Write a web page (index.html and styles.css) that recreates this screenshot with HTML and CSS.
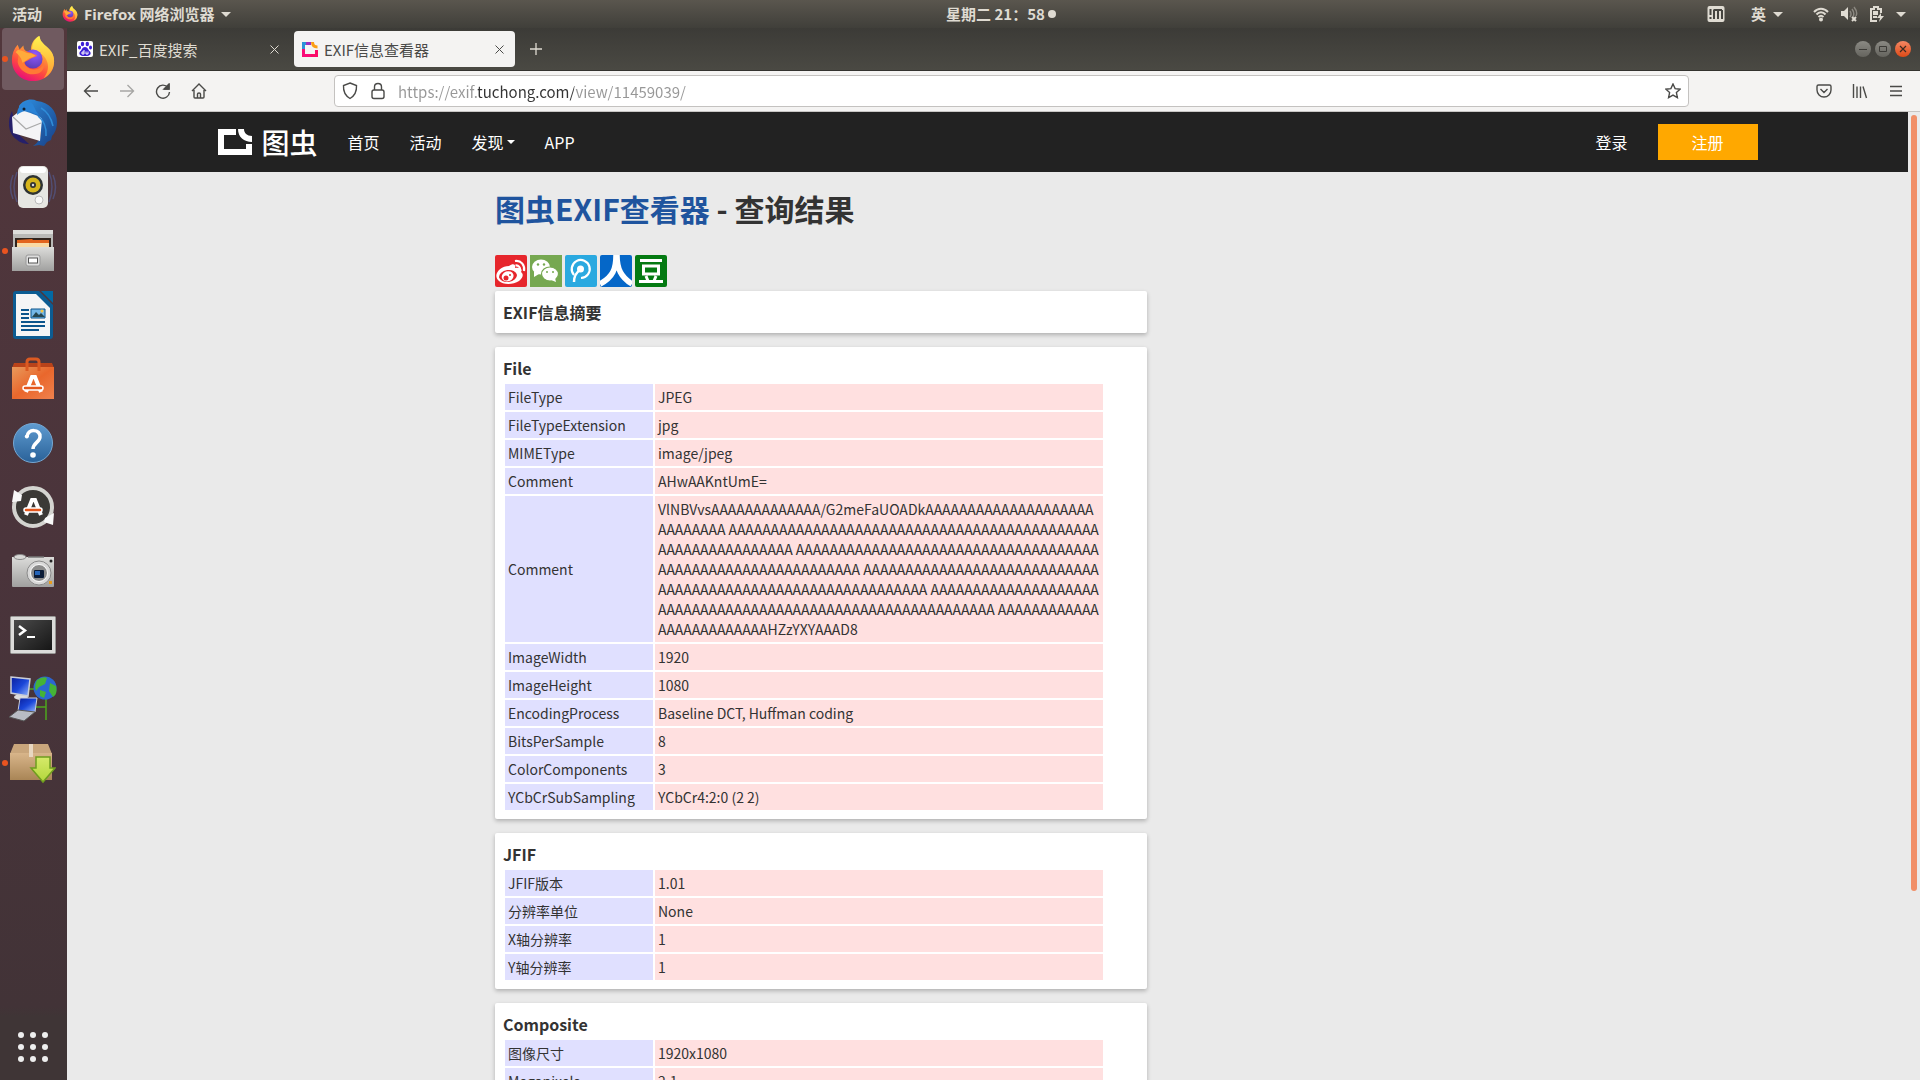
FILE: index.html
```html
<!DOCTYPE html>
<html lang="zh-CN">
<head>
<meta charset="utf-8">
<title>EXIF信息查看器</title>
<link rel="stylesheet" href="styles.css">
</head>
<body>
<svg class="defs" aria-hidden="true">
  <defs>
    <linearGradient id="fox" x1="0.8" y1="0" x2="0.3" y2="1"><stop offset="0" stop-color="#fff44f"/><stop offset=".35" stop-color="#ffa436"/><stop offset=".7" stop-color="#ff4a3f"/><stop offset="1" stop-color="#e60b7b"/></linearGradient>
    <radialGradient id="globe" cx=".6" cy=".25" r=".8"><stop offset="0" stop-color="#9059ff"/><stop offset="1" stop-color="#5b3bb0"/></radialGradient>
    <linearGradient id="tail" x1="0" y1="0" x2="0" y2="1"><stop offset="0" stop-color="#fff44f"/><stop offset="1" stop-color="#ff9a33"/></linearGradient>
    <linearGradient id="bird" x1="0" y1="0" x2="1" y2="1"><stop offset="0" stop-color="#2f8fe0"/><stop offset="1" stop-color="#173f86"/></linearGradient>
    <linearGradient id="steel" x1="0" y1="0" x2="0" y2="1"><stop offset="0" stop-color="#dcdcda"/><stop offset="1" stop-color="#a0a09f"/></linearGradient>
    <linearGradient id="bag" x1="0" y1="0" x2="1" y2="1"><stop offset="0" stop-color="#e89a5c"/><stop offset=".5" stop-color="#e9672c"/><stop offset="1" stop-color="#f0824e"/></linearGradient>
    <linearGradient id="help" x1="0" y1="0" x2="0" y2="1"><stop offset="0" stop-color="#5f9bd0"/><stop offset="1" stop-color="#2a6299"/></linearGradient>
    <linearGradient id="term" x1="0" y1="0" x2="1" y2="1"><stop offset="0" stop-color="#4a4a4a"/><stop offset="1" stop-color="#161616"/></linearGradient>
    <linearGradient id="screen" x1="0" y1="0" x2="1" y2="1"><stop offset="0" stop-color="#0a1f9c"/><stop offset=".5" stop-color="#1a46d8"/><stop offset="1" stop-color="#9bbcff"/></linearGradient>
    <linearGradient id="box" x1="0" y1="0" x2="0" y2="1"><stop offset="0" stop-color="#d8b58a"/><stop offset="1" stop-color="#a98556"/></linearGradient>
    <linearGradient id="leaf" x1="0" y1="0" x2="0" y2="1"><stop offset="0" stop-color="#d6ea6a"/><stop offset="1" stop-color="#b2d63b"/></linearGradient>
    <symbol id="firefox" viewBox="0 0 48 48">
      <path d="M24 47C11 47 2 37 2 25 2 19 4 13 8 9l2 5 4-4c0 3 1 5 3 6h5c-1-7 3-13 8-16 0 4 2 6 5 9 6 4 11 10 11 17 0 12-9 21-22 21z" fill="url(#fox)"/>
      <path d="M23 14c0-7 4-12 8-14 0 4 2 6 5 9 6 5 10 9 10 17 0 9-5 15-11 18 5-6 6-13 3-19-2-5-8-9-15-11z" fill="url(#tail)"/>
      <circle cx="24" cy="24" r="10" fill="url(#globe)"/>
      <path d="M9 18c4-3 9-2 14 0l5 2c0 2-5 2-7 4-3 2-5 2-6 4 1 4 5 7 10 7 6 0 9-3 10-7 2 7-3 12-11 12S9 34 8 27z" fill="#ff7a35"/>
      <path d="M6 17c2-4 5-2 8-1 3 2 5 2 8 2l4 2c0 2-5 2-7 4-3 2-4 3-6 4-1-5-3-7-7-11z" fill="#ffab3b"/>
    </symbol>
  </defs>
</svg>

<header class="topbar">
  <div class="topbar-side">
    <button class="top-btn">活动</button>
    <button class="top-btn app-menu"><svg width="16" height="18"><use href="#firefox"/></svg><span>Firefox 网络浏览器</span><i class="caret"></i></button>
  </div>
  <button class="top-btn clock">星期二 21：58<i class="dot"></i></button>
  <div class="topbar-side status">
    <svg width="18" height="18" viewBox="0 0 18 18"><rect x=".5" y="1" width="17" height="16" rx="2" fill="#dfdbd2"/><path d="M3.500 4v6M3.500 12v2M7 14V4.500M7 5h8M11 5v9M15 5v9" stroke="#45443f" stroke-width="2" fill="none"/></svg>
    <button class="top-btn lang">英<i class="caret"></i></button>
    <div class="tray">
      <svg width="16" height="16" viewBox="0 0 16 16" fill="none" stroke="#dfdbd2" stroke-width="2"><path d="M1 6c4-4.500 10-4.500 14 0M3.500 8.500c2.500-3 6.500-3 9 0M5.500 11c1.500-1.500 3.500-1.500 5 0"/><circle cx="8" cy="13.500" r="1" fill="#dfdbd2"/></svg>
      <svg width="18" height="16" viewBox="0 0 18 16"><path d="M1 5h3l4-4v13l-4-4H1z" fill="#dfdbd2"/><path d="M10 5q2 3 0 6M12 3q3 4 1 8M14 1q4 5 2 9" fill="none" stroke="#8a877f" stroke-width="1.500"/><path d="M12 11l4 4m0-4l-4 4" stroke="#dfdbd2" stroke-width="2"/></svg>
      <svg width="16" height="18" viewBox="0 0 16 18" fill="none" stroke="#dfdbd2" stroke-width="2"><path d="M12 8V4H9V2H5v2H2v12h6M4 9h5M4 12h4M4 7h5"/><path d="M12 8l-4 5h3l-1 4 5-6h-3z" fill="#dfdbd2" stroke="none"/></svg>
      <i class="caret"></i>
    </div>
  </div>
</header>

<div class="desktop">
  <nav class="dock" aria-label="Dock">
    <button class="app running current" aria-label="Firefox"><svg width="46" height="48"><use href="#firefox"/></svg></button>
    <button class="app" aria-label="Thunderbird"><svg width="48" height="48" viewBox="0 0 48 48"><path d="M10 7C14 1 22-1 28 2c12 1 20 10 20 21 0 6-2 11-5 14l-1 4-4 2-3 4-5-1-6 1c5-3 8-8 8-14L10 18z" fill="url(#bird)"/><path d="M3 12c-5 10-4 22 4 28 4 4 9 5 13 5L8 34z" fill="#26206a"/><path d="M3 18l9-7c8 3 18 5 21 9l-2 22L4 34z" fill="#f4f4f6"/><path d="M4 18l13 12 15-6" fill="none" stroke="#aaa" stroke-width="1.200"/><path d="M8 16c0-8 5-13 13-13 5 2 4 8 9 13-6-1-9-5-14-4-4 1-6 2-8 4z" fill="#2a83d6"/><circle cx="15" cy="10" r="1.500" fill="#123"/><path d="M32 9q9 5 12 18M29 17q9 7 8 20" stroke="#2f8cd8" stroke-width="1.500" fill="none"/></svg></button>
    <button class="app" aria-label="Rhythmbox"><svg width="48" height="48" viewBox="0 0 48 48"><g fill="none" stroke="#53598a" stroke-opacity=".7" stroke-width="1.500"><path d="M8 9q-6 15 0 30M4 12q-5 12 0 24M40 9q6 15 0 30M44 12q5 12 0 24"/></g><rect x="9" y="3" width="30" height="42" rx="5" fill="#e6e6e2"/><rect x="11" y="4" width="26" height="6" rx="3" fill="#fff"/><circle cx="24" cy="22" r="10" fill="#2e3333"/><circle cx="24" cy="22" r="7.500" fill="#d6b51c"/><circle cx="24" cy="22" r="3" fill="#333"/><circle cx="24" cy="22" r="1.200" fill="#ddd"/><circle cx="30" cy="37" r="4" fill="#f9f9f8" stroke="#bbb"/></svg></button>
    <button class="app running" aria-label="文件"><svg width="44" height="46" viewBox="0 0 44 46"><path d="M2 2h40v20H2z" fill="#b9b9b7"/><path d="M2 2h40v4H2z" fill="#dededc"/><path d="M4 10h36v10H4z" fill="#30241e"/><path d="M6 12l15-1 1 1h16v8H6z" fill="#e2641e"/><path d="M6 15h32v4H6z" fill="#f9d9a4"/><path d="M1 19h42v24H1z" fill="url(#steel)"/><rect x="15" y="27" width="14" height="11" rx="2" fill="#ddd" stroke="#999"/><rect x="17.500" y="30" width="9" height="5" fill="#fff" stroke="#555"/></svg></button>
    <button class="app" aria-label="LibreOffice Writer"><svg width="40" height="48" viewBox="0 0 40 48"><path d="M3 0h23l14 14v31q0 3-3 3H3q-3 0-3-3V3q0-3 3-3z" fill="#0c5c92"/><path d="M28 0h12v12z" fill="#0369a3"/><path d="M3 3h20l14 14v28H3z" fill="#f5f5f5"/><path d="M8 19h8M8 23h8M8 27h8M8 31h24M8 35h24M8 39h18" stroke="#0b548b" stroke-width="2"/><path d="M18 18h14v9H18z" fill="#75b7e6" stroke="#0b548b"/><path d="M19 26l4-5 3 3 2-2 4 4z" fill="#274750"/><circle cx="29" cy="20" r="1.500" fill="#f5c542"/></svg></button>
    <button class="app" aria-label="Ubuntu 软件"><svg width="44" height="46" viewBox="0 0 44 46"><path d="M3 7h38l2 5H1z" fill="#b9431a"/><path d="M1 11h42v32H1z" fill="url(#bag)"/><path d="M16 15V6q0-3 3-3h6q3 0 3 3v9" fill="none" stroke="#db5a22" stroke-width="3"/><path d="M15 36l6-15h3l6 15" fill="none" stroke="#fff" stroke-width="4"/><rect x="12" y="30" width="20" height="4" rx="2" fill="#e4571d" stroke="#fff" stroke-width="1.500"/></svg></button>
    <button class="app" aria-label="帮助"><svg width="42" height="42" viewBox="0 0 42 42"><circle cx="21" cy="21" r="19.500" fill="url(#help)" stroke="#76a8d3"/><path d="M15 15c0-9 14-8 13 0 0 5-7 6-7 12" fill="none" stroke="#fff" stroke-width="3.500"/><circle cx="14.800" cy="14.500" r="2" fill="#fff"/><circle cx="21" cy="33" r="2.800" fill="#fff"/></svg></button>
    <button class="app" aria-label="软件更新器"><svg width="44" height="44" viewBox="0 0 44 44"><circle cx="22" cy="22" r="19" fill="#3b3936" stroke="#d4d4d0" stroke-width="4"/><path d="M1 17L3 5l8 5-1 6zM43 28l-1 12-9-3 1-4z" fill="#f8f8f8"/><path d="M15 30l6-15h3l6 15" fill="none" stroke="#fff" stroke-width="4"/><rect x="13" y="23" width="18" height="4" rx="2" fill="#e4571d" stroke="#fff" stroke-width="1.500"/></svg></button>
    <button class="app" aria-label="相机"><svg width="44" height="36" viewBox="0 0 44 36"><path d="M1 4h42v29q0 1-1 1H2q-1 0-1-1z" fill="url(#steel)"/><ellipse cx="9" cy="4" rx="6" ry="2.500" fill="#d8d8d6" stroke="#888"/><path d="M17 4h16" stroke="#777" stroke-width="1.500"/><circle cx="28" cy="20" r="12" fill="#d9d9d9" stroke="#8a8a8a"/><circle cx="28" cy="20" r="8.500" fill="#8b8b8b" stroke="#fff"/><rect x="23" y="17" width="10" height="8" rx="1" fill="#0b1c38"/><rect x="24" y="18" width="5" height="4" fill="#2564b8"/><circle cx="40" cy="8" r="1.500" fill="#222"/><path d="M38 28h3v3h-3z" fill="#e99b1c"/></svg></button>
    <button class="app" aria-label="终端"><svg width="46" height="38" viewBox="0 0 46 38"><rect x=".5" y=".5" width="45" height="37" rx="1" fill="#dcdcda" stroke="#989896"/><path d="M4 4h38v30H4z" fill="url(#term)"/><path d="M9 10l6 4.500L9 19" fill="none" stroke="#fff" stroke-width="2.500"/><path d="M17 21h8" stroke="#fff" stroke-width="2"/></svg></button>
    <button class="app" aria-label="网络"><svg width="48" height="46" viewBox="0 0 48 46"><path d="M20 13h8M37 22v22M24 31h13" stroke="#4ea51e" stroke-width="1.500"/><ellipse cx="12" cy="21" rx="7" ry="3" fill="#ddd"/><path d="M2 1l19 2-2 17-17-3z" fill="url(#screen)" stroke="#c9cdd8" stroke-width="1.500"/><path d="M11 22h17l-2 14-17-1z" fill="url(#screen)" stroke="#c9cdd8"/><path d="M0 41l9-7 17 2-11 9z" fill="#b8bcc4" stroke="#555"/><circle cx="36" cy="12" r="11.500" fill="#2b66d2"/><path d="M28 4q6-4 10-2l-2 6-6 3-3 4q-2-6 1-11zM41 7l6 3q2 8-3 11l-4-6zM31 14l6 2-2 6-4-2z" fill="#45b336"/></svg></button>
    <button class="app running" aria-label="安装包"><svg width="46" height="42" viewBox="0 0 46 42"><path d="M4 2h34l4 10H0z" fill="#c9a67c"/><path d="M0 11h42v27H0z" fill="url(#box)"/><path d="M19 2h4v13h-4z" fill="#e8d8c2"/><path d="M26 15h14v11h5L33 40 21 26h5z" fill="url(#leaf)" stroke="#6f9d1f" stroke-width="1.500"/></svg></button>
    <button class="app all-apps" aria-label="显示应用程序"><svg width="30" height="30" viewBox="0 0 30 30" fill="#eee"><circle cx="3" cy="3" r="3"/><circle cx="15" cy="3" r="3"/><circle cx="27" cy="3" r="3"/><circle cx="3" cy="15" r="3"/><circle cx="15" cy="15" r="3"/><circle cx="27" cy="15" r="3"/><circle cx="3" cy="27" r="3"/><circle cx="15" cy="27" r="3"/><circle cx="27" cy="27" r="3"/></svg></button>
  </nav>

  <div class="browser">
    <div class="tabstrip">
      <div class="tab">
        <svg width="16" height="16" viewBox="0 0 16 16"><rect width="16" height="16" rx="2" fill="#fff"/><g fill="#3c1fd6"><ellipse cx="5.500" cy="3" rx="1.700" ry="2.200"/><ellipse cx="10.300" cy="3" rx="1.700" ry="2.200"/><ellipse cx="2.500" cy="6.500" rx="1.500" ry="2"/><ellipse cx="13.500" cy="6.500" rx="1.500" ry="2"/><path d="M8 6c3 0 3 3 5 4.500 2 3-1 5-5 4.500-4 .5-7-1.500-5-4.500C5 9 5 6 8 6z"/></g><path d="M7 9v4H5v-2h2M9 10.500V13h2v-2.500" fill="none" stroke="#fff"/></svg>
        <span class="tab-title">EXIF_百度搜索</span>
        <button class="tab-close" aria-label="关闭"><svg width="9" height="9" viewBox="0 0 9 9"><path d="M.5.500l8 8m0-8l-8 8" stroke="currentColor"/></svg></button>
      </div>
      <div class="tab active">
        <svg width="16" height="16" viewBox="0 0 16 16" fill="none" stroke-width="3"><path d="M10 14.500H1.500V8" stroke="#fa0a78"/><path d="M1.500 8V2.500H5" stroke="#2a92d8"/><path d="M4 2.500h5" stroke="#9a2fc0"/><path d="M9 14.500h5.500V9" stroke="#fb0a68"/><path d="M10.500 1c0 3 1.500 5 5 5" stroke="#fb9d14"/></svg>
        <span class="tab-title">EXIF信息查看器</span>
        <button class="tab-close" aria-label="关闭"><svg width="9" height="9" viewBox="0 0 9 9"><path d="M.5.500l8 8m0-8l-8 8" stroke="currentColor"/></svg></button>
      </div>
      <button class="new-tab" aria-label="新建标签页"><svg width="12" height="12" viewBox="0 0 12 12"><path d="M6 0v12M0 6h12" stroke="currentColor" stroke-width="1.300"/></svg></button>
      <div class="window-buttons">
        <button class="win" aria-label="最小化"><svg width="16" height="16" viewBox="0 0 16 16"><path d="M4 8.500h8" stroke="#3c3b37"/></svg></button>
        <button class="win" aria-label="最大化"><svg width="16" height="16" viewBox="0 0 16 16"><path d="M4.500 5.500h7v5h-7z" fill="none" stroke="#3c3b37"/></svg></button>
        <button class="win close" aria-label="关闭窗口"><svg width="16" height="16" viewBox="0 0 16 16"><path d="M5 5l6 6m0-6l-6 6" stroke="#3c2a20" stroke-width="1.200"/></svg></button>
      </div>
    </div>

    <div class="toolbar">
      <div class="tools">
        <button class="tool" aria-label="后退"><svg width="16" height="16" viewBox="0 0 16 16"><path d="M15 8H1.500M7.500 2l-6 6 6 6"/></svg></button>
        <button class="tool" disabled aria-label="前进"><svg width="16" height="16" viewBox="0 0 16 16"><path d="M1 8h13.500M8.500 2l6 6-6 6"/></svg></button>
        <button class="tool" aria-label="刷新"><svg width="16" height="16" viewBox="0 0 16 16"><path d="M13 4.500A6.500 6.500 0 1 0 14.500 9M14 1v5H9"/><path d="M14 1v5H9z" fill="#4a4a48"/></svg></button>
        <button class="tool" aria-label="主页"><svg width="16" height="16" viewBox="0 0 16 16"><path d="M1 8l7-7 7 7M3 7v7q0 1 1 1h8q1 0 1-1V7M6.500 15v-4q0-1 1.500-1t1.500 1v4"/></svg></button>
      </div>
      <div class="urlbar">
        <svg width="16" height="18" viewBox="0 0 16 18"><path d="M8 1l6.500 2.500c.3 5-1.500 10-6.500 13C3 13.500 1.200 8.500 1.500 3.500z"/></svg>
        <svg width="16" height="18" viewBox="0 0 16 18"><rect x="2" y="8" width="12" height="8.500" rx="2"/><path d="M4.500 8V5q0-3.500 3.500-3.500T11.500 5v3"/></svg>
        <input class="url" type="text" aria-label="地址" value="https://exif.tuchong.com/view/11459039/">
        <svg width="16" height="16" viewBox="0 0 16 16"><path d="M8 1l2.100 4.600 5 .6-3.700 3.400 1 5L8 12.100l-4.400 2.500 1-5L.9 6.200l5-.6z"/></svg>
      </div>
      <div class="tools">
        <button class="tool" aria-label="Pocket"><svg width="16" height="16" viewBox="0 0 16 16"><path d="M2.500 2h11q1.500 0 1.500 1.500V7a7 7 0 0 1-14 0V3.500Q1 2 2.500 2zM4.500 6L8 9.500 11.500 6"/></svg></button>
        <button class="tool" aria-label="书签库"><svg width="16" height="16" viewBox="0 0 16 16"><path d="M1.500 1v14M5 3.500V15M8.500 3.500V15M11 3.500L14.500 15"/></svg></button>
        <button class="tool" aria-label="菜单"><svg width="16" height="16" viewBox="0 0 16 16"><path d="M2 3.500h12M2 8h12M2 12.500h12"/></svg></button>
      </div>
    </div>

    <div class="viewport">
      <div class="page">
        <header class="site-header">
          <div class="site-bar">
            <a class="logo" href="#"><svg width="34" height="26" viewBox="0 0 34 26" fill="#fff"><path d="M0 0h18v6H6v14h22v-5h6v11H0z"/><path d="M20 0h6c0 4 3 7 8 7v6C26 13 20 8 20 0z"/></svg><span>图虫</span></a>
            <a class="nav-link" href="#">首页</a>
            <a class="nav-link" href="#">活动</a>
            <a class="nav-link" href="#">发现<i class="caret small"></i></a>
            <a class="nav-link" href="#">APP</a>
            <a class="login" href="#">登录</a>
            <button class="signup">注册</button>
          </div>
        </header>

        <main class="content">
          <div class="column">
            <h1 class="title"><a href="#">图虫EXIF查看器</a> - 查询结果</h1>
            <div class="share">
              <a href="#" aria-label="微博"><svg width="32" height="32" viewBox="0 0 32 32"><rect width="32" height="32" rx="2" fill="#e6262c"/><path d="M14 11c4-3 7-2 6 2 5-1 8 1 6 4 3 2 2 6-2 9-6 4-16 4-20 0-7-6 1-15 10-15z" fill="#fff"/><ellipse cx="13" cy="21" rx="9" ry="6" transform="rotate(-8 13 21)" fill="#e6262c"/><ellipse cx="12.500" cy="21.500" rx="6" ry="5" transform="rotate(-20 12 21)" fill="#fff"/><circle cx="11" cy="23" r="2.500" fill="#e6262c"/><circle cx="15" cy="20" r="1" fill="#e6262c"/><path d="M20 6c6-1 10 4 9 10M20.500 10.500c3-.5 5 2 4.500 4.500" fill="none" stroke="#fff" stroke-width="2.200"/></svg></a>
              <a href="#" aria-label="微信"><svg width="32" height="32" viewBox="0 0 32 32"><path fill="#76a851" d="M0 0h32v32H0z"/><ellipse cx="11" cy="12" rx="9" ry="7.500" fill="#fff"/><path d="M4 16l0 6 5-3z" fill="#fff"/><ellipse cx="20" cy="19" rx="8.500" ry="7" fill="#fff" stroke="#76a851" stroke-width="1.200"/><path d="M21 25l5 2-1-4z" fill="#fff"/><g fill="#76a851"><circle cx="8" cy="9.500" r="1.200"/><circle cx="14" cy="9.500" r="1.200"/><circle cx="17" cy="17" r="1"/><circle cx="23" cy="17" r="1"/></g></svg></a>
              <a href="#" aria-label="腾讯微博"><svg width="32" height="32" viewBox="0 0 32 32"><rect width="32" height="32" rx="2" fill="#2aa9e0"/><path d="M9 20a9 9 0 1 1 7 3" fill="none" stroke="#fff" stroke-width="2.200"/><path d="M15 15q-6 4-6 12" fill="none" stroke="#fff" stroke-width="2.500"/><circle cx="15.500" cy="14" r="3.500" fill="#fff"/></svg></a>
              <a href="#" aria-label="人人网"><svg width="32" height="32" viewBox="0 0 32 32"><rect width="32" height="32" rx="2" fill="#0567c8"/><path d="M16 0c0 14-3 22-16 29M17 0c0 14 4 22 15 29" fill="none" stroke="#fff" stroke-width="5.500"/></svg></a>
              <a href="#" aria-label="豆瓣"><svg width="32" height="32" viewBox="0 0 32 32"><rect width="32" height="32" rx="2" fill="#047a12"/><path d="M5 5.500h22M4 26.500h24M8.500 11h15v8h-15zM11 21l2 5M21 21l-2 5" fill="none" stroke="#fff" stroke-width="3"/></svg></a>
            </div>

            <section class="card"><h2>EXIF信息摘要</h2></section>

            <section class="card">
              <h2>File</h2>
              <table class="exif">
                <tr><th scope="row">FileType</th><td>JPEG</td></tr>
                <tr><th scope="row">FileTypeExtension</th><td>jpg</td></tr>
                <tr><th scope="row">MIMEType</th><td>image/jpeg</td></tr>
                <tr><th scope="row">Comment</th><td>AHwAAKntUmE=</td></tr>
                <tr><th scope="row">Comment</th><td>VlNBVvsAAAAAAAAAAAAA/G2meFaUOADkAAAAAAAAAAAAAAAAAAAA<br>AAAAAAAA AAAAAAAAAAAAAAAAAAAAAAAAAAAAAAAAAAAAAAAAAAAA<br>AAAAAAAAAAAAAAAA AAAAAAAAAAAAAAAAAAAAAAAAAAAAAAAAAAAA<br>AAAAAAAAAAAAAAAAAAAAAAAA AAAAAAAAAAAAAAAAAAAAAAAAAAAA<br>AAAAAAAAAAAAAAAAAAAAAAAAAAAAAAAA AAAAAAAAAAAAAAAAAAAA<br>AAAAAAAAAAAAAAAAAAAAAAAAAAAAAAAAAAAAAAAA AAAAAAAAAAAA<br>AAAAAAAAAAAAAHZzYXYAAAD8</td></tr>
                <tr><th scope="row">ImageWidth</th><td>1920</td></tr>
                <tr><th scope="row">ImageHeight</th><td>1080</td></tr>
                <tr><th scope="row">EncodingProcess</th><td>Baseline DCT, Huffman coding</td></tr>
                <tr><th scope="row">BitsPerSample</th><td>8</td></tr>
                <tr><th scope="row">ColorComponents</th><td>3</td></tr>
                <tr><th scope="row">YCbCrSubSampling</th><td>YCbCr4:2:0 (2 2)</td></tr>
              </table>
            </section>

            <section class="card">
              <h2>JFIF</h2>
              <table class="exif">
                <tr><th scope="row">JFIF版本</th><td>1.01</td></tr>
                <tr><th scope="row">分辨率单位</th><td>None</td></tr>
                <tr><th scope="row">X轴分辨率</th><td>1</td></tr>
                <tr><th scope="row">Y轴分辨率</th><td>1</td></tr>
              </table>
            </section>

            <section class="card">
              <h2>Composite</h2>
              <table class="exif">
                <tr><th scope="row">图像尺寸</th><td>1920x1080</td></tr>
                <tr><th scope="row">Megapixels</th><td>2.1</td></tr>
              </table>
            </section>
          </div>
        </main>
      </div>
      <div class="scrollbar"><div class="thumb"></div></div>
    </div>
  </div>
</div>
</body>
</html>
```
FILE: styles.css
```css
* { box-sizing: border-box; }
body {
  margin: 0;
  height: 100vh;
  display: flex;
  flex-direction: column;
  overflow: hidden;
  font-family: "Noto Sans CJK SC", sans-serif;
  font-size: 15px;
  color: #333;
}
button { border: 0; padding: 0; background: none; font: inherit; color: inherit; }
a { text-decoration: none; color: inherit; }
svg { display: block; flex: none; }
.defs { position: absolute; width: 0; height: 0; }

/* GNOME top bar */
.topbar {
  display: grid;
  grid-template-columns: 1fr auto 1fr;
  align-items: center;
  height: 28px;
  flex: none;
  padding: 0 14px 0 12px;
  background: linear-gradient(#5a564e, #403f3a);
  color: #dfdbd2;
  font-weight: bold;
}
.topbar-side { display: flex; align-items: center; gap: 20px; }
.top-btn { display: flex; align-items: center; line-height: 28px; }
.app-menu { gap: 6px; font-family: "Noto Sans", "Noto Sans CJK SC", sans-serif; }
.caret { border: 5px solid transparent; border-top-color: currentColor; border-bottom: 0; }
.caret.small { border-width: 4px; border-bottom: 0; margin-left: 3px; }
.clock { gap: 3px; padding-left: 84px; font-family: "Noto Sans CJK TC", sans-serif; }
.dot { width: 8px; height: 8px; border-radius: 50%; background: currentColor; }
.status { justify-content: flex-end; gap: 26px; }
.lang { gap: 7px; }
.tray { display: flex; align-items: center; gap: 11px; padding-left: 4px; }

/* Dock */
.desktop { flex: 1; min-height: 0; display: flex; }
.dock {
  width: 67px;
  flex: none;
  display: flex;
  flex-direction: column;
  background: linear-gradient(#52373c, #4a343b 50%, #423337 93%, #3f3536 94%);
}
.app {
  position: relative;
  width: 62px;
  height: 62px;
  margin: 0 0 2px 2px;
  border-radius: 4px;
  display: flex;
  align-items: center;
  justify-content: center;
  flex: none;
}
.app.current { background: #705a60; }
.app.running::before {
  content: "";
  position: absolute;
  left: 0;
  top: 28px;
  width: 6px;
  height: 6px;
  border-radius: 50%;
  background: #e95420;
}
.all-apps { margin-top: auto; }

/* Browser window */
.browser { flex: 1; min-width: 0; display: flex; flex-direction: column; }
.tabstrip {
  display: flex;
  align-items: center;
  height: 43px;
  flex: none;
  padding: 0 9px 0 2px;
  background: linear-gradient(#3c3b37, #4a4943);
  border-bottom: 1px solid #33322e;
  color: #dfdbd2;
}
.tab {
  display: flex;
  align-items: center;
  gap: 6px;
  width: 221px;
  height: 36px;
  margin-right: 4px;
  padding: 0 8px;
  border-radius: 4px;
}
.tab.active { background: #f4f3f2; color: #4a4a48; }
.tab-title { flex: 1; white-space: nowrap; }
.tab-close { width: 16px; height: 16px; display: flex; align-items: center; justify-content: center; }
.new-tab { padding: 12px 11px; }
.window-buttons { display: flex; gap: 4px; margin-left: auto; }
.win { width: 16px; height: 16px; border-radius: 50%; background: linear-gradient(#8b8a84, #65645e); }
.win.close { background: linear-gradient(#f58763, #dd4a17); }

.toolbar {
  display: flex;
  align-items: center;
  height: 41px;
  flex: none;
  padding: 0 6px;
  background: #f4f3f2;
  border-bottom: 1px solid #c8c6c4;
}
.tools { display: flex; }
.tool { width: 36px; height: 36px; display: flex; align-items: center; justify-content: center; }
.tool svg, .urlbar svg { fill: none; stroke: #4a4a48; stroke-width: 1.4; }
.tool:disabled { opacity: .45; }
.urlbar {
  flex: 1;
  height: 32px;
  margin: 0 117px;
  display: flex;
  align-items: center;
  gap: 12px;
  padding: 0 7px;
  border: 1px solid #c4c2c0;
  border-radius: 4px;
  background: #fff;
}
.url {
  flex: 1;
  min-width: 0;
  height: 28px;
  padding: 0;
  border: 0;
  outline: 0;
  font: inherit;
  color: transparent;
  background: linear-gradient(90deg, #979797 80px, #333 80px 176px, #979797 176px);
  -webkit-background-clip: text;
  background-clip: text;
}

/* Web page */
.viewport { flex: 1; min-height: 0; display: flex; background: #eaeaea; }
.page { flex: 1; min-width: 0; overflow: hidden; }
.scrollbar { width: 12px; flex: none; padding: 3px; }
.thumb { height: 80.7%; border-radius: 3px; background: #f18f68; }

.site-header { background: #222; color: #fff; font-size: 16px; }
.site-bar {
  display: flex;
  align-items: center;
  gap: 30px;
  max-width: 1540px;
  height: 60px;
  margin: 0 auto;
}
.logo { display: flex; align-items: center; gap: 10px; width: 100px; font-size: 28px; font-weight: 500; line-height: 30px; white-space: nowrap; }
.nav-link { display: flex; align-items: center; line-height: 24px; }
.login { margin-left: auto; }
.signup { width: 100px; height: 36px; background: #ffa800; color: #fff; }

.content { max-width: 985px; margin: 0 auto; }
.column { width: 652px; }
.title { margin: 0; padding: 14px 0 25px; font-size: 30px; line-height: 44px; font-weight: bold; }
.title a { color: #1f549e; }
.share { display: flex; gap: 3px; margin-bottom: 4px; }
.card {
  margin-bottom: 14px;
  padding: 7px 8px;
  border-radius: 2px;
  background: #fff;
  box-shadow: 0 2px 4px rgba(0, 0, 0, .25);
}
.card h2 { margin: 0; font-size: 16px; line-height: 28px; font-weight: bold; }
.exif { width: 602px; table-layout: fixed; border-spacing: 2px; font-size: 14px; line-height: 20px; }
.exif th, .exif td { padding: 3px; text-align: left; font-weight: normal; white-space: nowrap; }
.exif th { width: 148px; background: #e0e0ff; }
.exif td { background: #ffe0e0; }
```
